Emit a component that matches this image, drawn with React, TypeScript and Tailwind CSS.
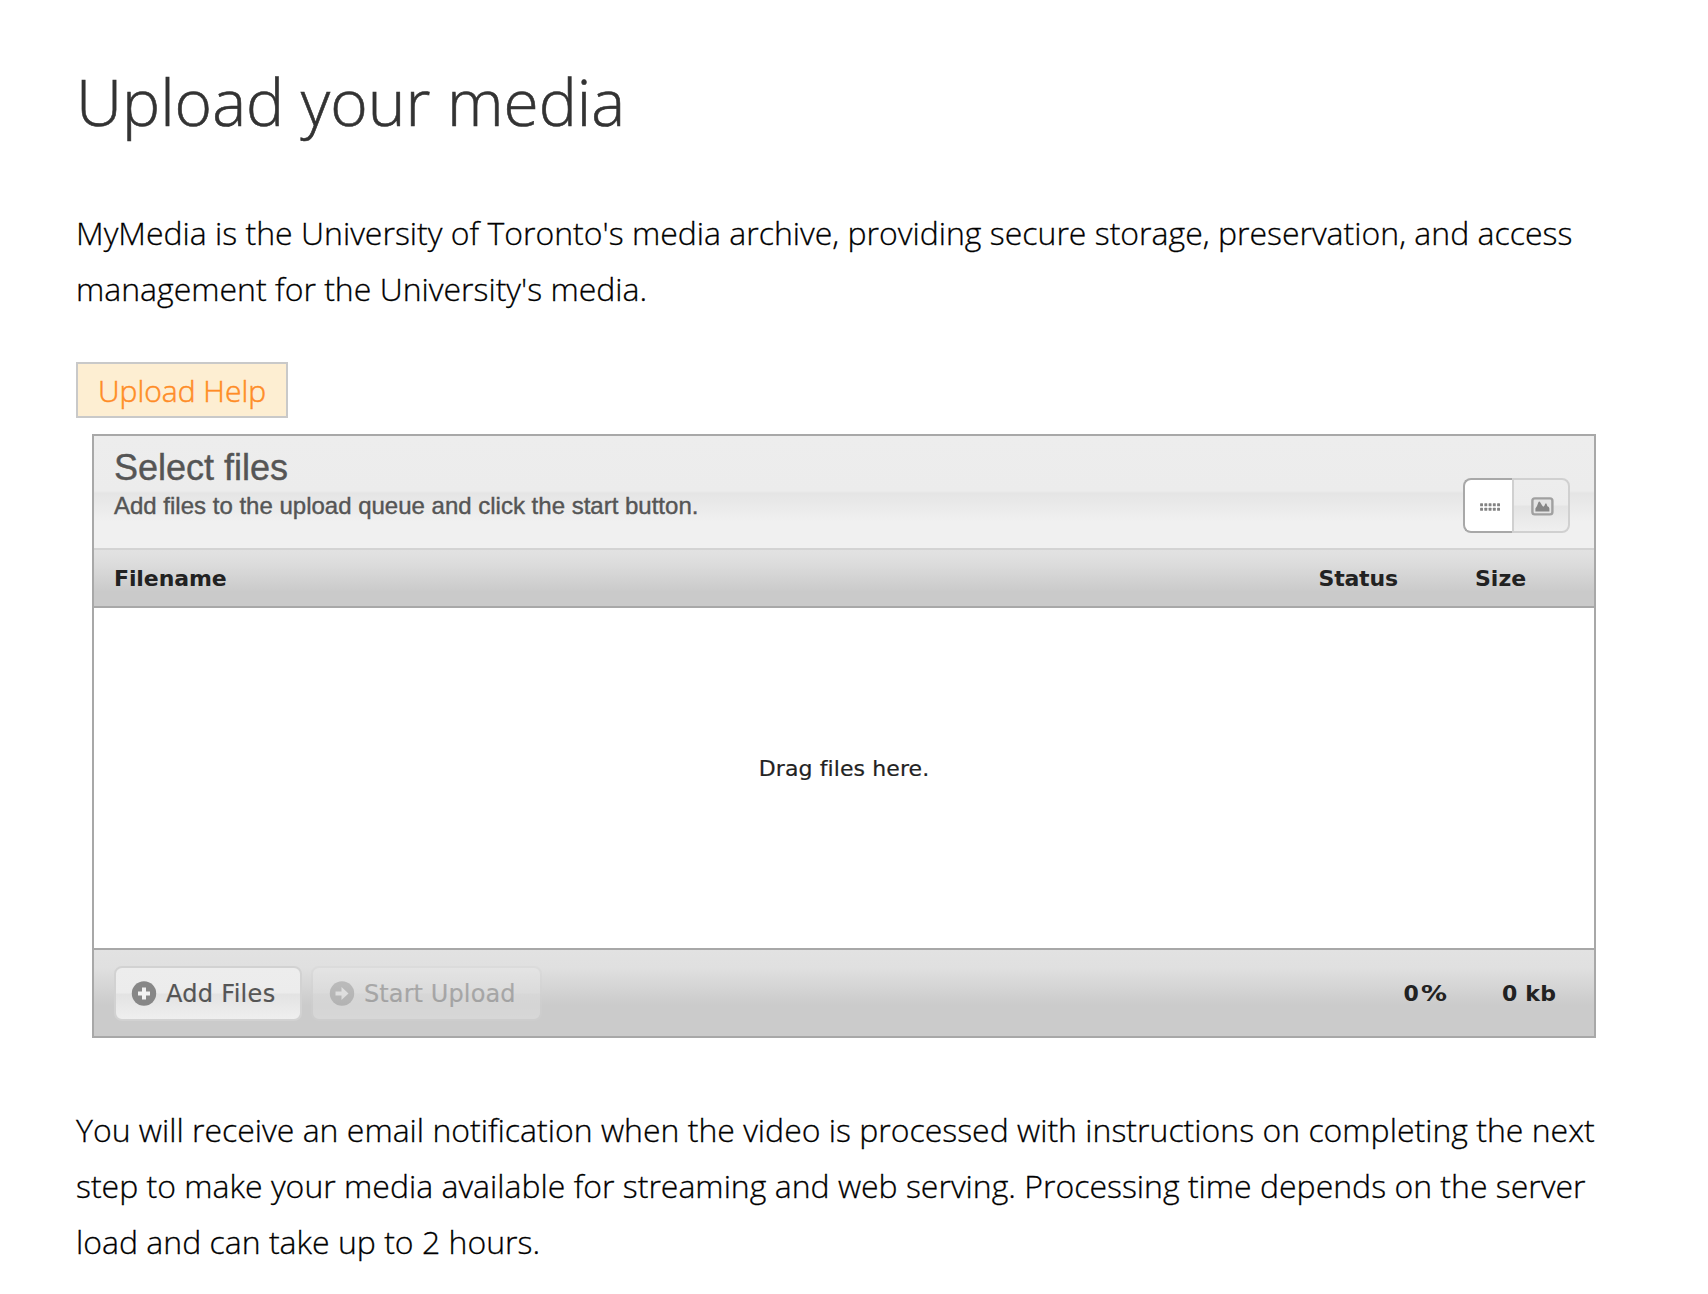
function PlusIcon() {
  return (
    <svg className="size-8" viewBox="0 0 32 32">
      <circle cx="16" cy="16.5" r="12.2" fill="#878787" />
      <path d="M16 10.5v12M10 16.5h12" stroke="#f2f2f2" strokeWidth="4" />
    </svg>
  );
}

function ArrowIcon() {
  return (
    <svg className="size-8" viewBox="0 0 32 32">
      <circle cx="16" cy="16.5" r="12.2" fill="#878787" />
      <path d="M9.5 14.5h6v-4.5l7 6.5-7 6.5v-4.5h-6z" fill="#f6f6f6" />
    </svg>
  );
}

function ListIcon() {
  const columns = [0, 4.25, 8.5, 12.75, 17];
  return (
    <svg className="h-2 w-5" viewBox="0 0 20 8" fill="#828282">
      {columns.map((x) => (
        <g key={x}>
          <rect x={x + 0.1} y="0.2" width="2.9" height="3" rx="0.5" />
          <rect x={x + 0.1} y="4.7" width="2.9" height="3" rx="0.5" />
        </g>
      ))}
    </svg>
  );
}

function ThumbIcon() {
  return (
    <svg className="h-[19px] w-[23px]" viewBox="0 0 23 19">
      <rect x="1.4" y="1.4" width="20" height="16" rx="2.4" fill="#e4e4e4" stroke="#a0a0a0" strokeWidth="2.4" />
      <path d="M4.4 14.4v-3l1.6-2.4 1.4-3.8q.9-1.2 1.8 0l1.8 3 1.2 1.6 1.2-1 1-2.2 1 0 1 2.6 1.4.8.6 1.6v2.8z" fill="#868686" />
    </svg>
  );
}

export default function App() {
  return (
    <main className="h-[1294px] w-[1708px] overflow-hidden bg-white pt-[62px] pl-[76px] font-['Open_Sans',sans-serif] text-[32px] leading-[56px] font-light text-black">
      <h1 className="text-[64px] leading-[80px] font-light text-[#333] [-webkit-text-stroke:0.6px]">Upload your media</h1>
      <p className="mt-[63px] [-webkit-text-stroke:0.3px]">
        MyMedia is the University of Toronto's media archive, providing secure storage, preservation, and access
        <br />
        management for the University's media.
      </p>
      <a className="mt-[45px] flex h-14 w-[212px] items-center justify-center border-2 border-[#c9c9c9] bg-[#fdeed2] pt-0.5 text-[30px] text-[#ff8c26] [-webkit-text-stroke:0.5px]">
        Upload Help
      </a>

      <section className="mt-4 ml-4 flex h-[604px] w-[1504px] flex-col border-2 border-[#a8a8a8] font-['DejaVu_Sans',Verdana,sans-serif] font-normal text-[#222]">
        <header className="flex h-[114px] justify-between border-b-2 border-[#d3d3d3] bg-[linear-gradient(to_bottom,#ededed_0%,#ececec_49%,#e5e5e5_51%,#f0f0f0_76%,#f0f0f0_100%)] pt-2.5 pr-6 pl-5 font-['Liberation_Sans',Arial,sans-serif] text-[#555]">
          <div className="[-webkit-text-stroke:0.4px]">
            <h2 className="text-[36px] leading-[44px]">Select files</h2>
            <p className="text-[24px] leading-[32px]">Add files to the upload queue and click the start button.</p>
          </div>
          <div className="mt-8 flex h-[55px]">
            <button className="flex w-[49px] items-center justify-center rounded-l-lg border-2 border-r-0 border-[#a8a8a8] bg-white pt-0.5 pl-0.5">
              <ListIcon />
            </button>
            <button className="flex w-[58px] items-center justify-center rounded-r-lg border-2 border-[#d0d0d0] bg-[linear-gradient(to_bottom,#ededed_0%,#ececec_48%,#e4e4e4_52%,#efefef_100%)] pt-0.5 pl-[3px]">
              <ThumbIcon />
            </button>
          </div>
        </header>

        <div className="flex h-[58px] items-center border-b-2 border-[#a8a8a8] bg-[linear-gradient(to_bottom,#e2e2e2_0%,#dddddd_22%,#cacaca_75%,#cacaca_100%)] pt-0.5 pl-5 text-[22px] font-bold">
          <span className="w-[1204.5px] tracking-[-0.1px]">Filename</span>
          <span className="w-[156.5px] tracking-[-0.2px]">Status</span>
          <span>Size</span>
        </div>

        <div className="flex h-[340px] items-center justify-center pb-[19px] text-[22px] tracking-[0.1px] [-webkit-text-stroke:0.2px]">
          Drag files here.
        </div>

        <footer className="flex flex-1 items-center border-t-2 border-[#a8a8a8] bg-[linear-gradient(to_bottom,#e2e2e2_0%,#e0e0e0_20%,#cbcbcb_64%,#cbcbcb_100%)] pl-5 text-[24px]">
          <button className="flex h-[55px] w-[188px] items-center rounded-lg border-2 border-[#d2d2d2] bg-[linear-gradient(to_bottom,#ededed_0%,#ececec_48%,#e3e3e3_52%,#efefef_100%)] pl-3 text-[#555]">
            <PlusIcon />
            <span className="ml-1.5 pt-px tracking-[0.3px] [-webkit-text-stroke:0.2px]">Add Files</span>
          </button>
          <button className="ml-[9px] flex h-[55px] w-[231px] items-center rounded-lg border-2 border-[#d2d2d2] bg-[linear-gradient(to_bottom,#ededed_0%,#ececec_48%,#e3e3e3_52%,#efefef_100%)] pl-[13px] text-[#555] opacity-35">
            <ArrowIcon />
            <span className="ml-1.5 pt-px tracking-[0.1px] [-webkit-text-stroke:0.2px]">Start Upload</span>
          </button>
          <div className="ml-[861.5px] flex pt-px text-[22px] font-bold">
            <span className="flex w-[98.5px] gap-[2px]">
              0<span className="inline-block origin-left scale-x-[1.18]">%</span>
            </span>
            <span className="tracking-[0.2px]">0 kb</span>
          </div>
        </footer>
      </section>

      <p className="mt-16 [-webkit-text-stroke:0.3px]">
        You will receive an email notification when the video is processed with instructions on completing the next
        <br />
        step to make your media available for streaming and web serving. Processing time depends on the server
        <br />
        load and can take up to 2 hours.
      </p>
    </main>
  );
}
